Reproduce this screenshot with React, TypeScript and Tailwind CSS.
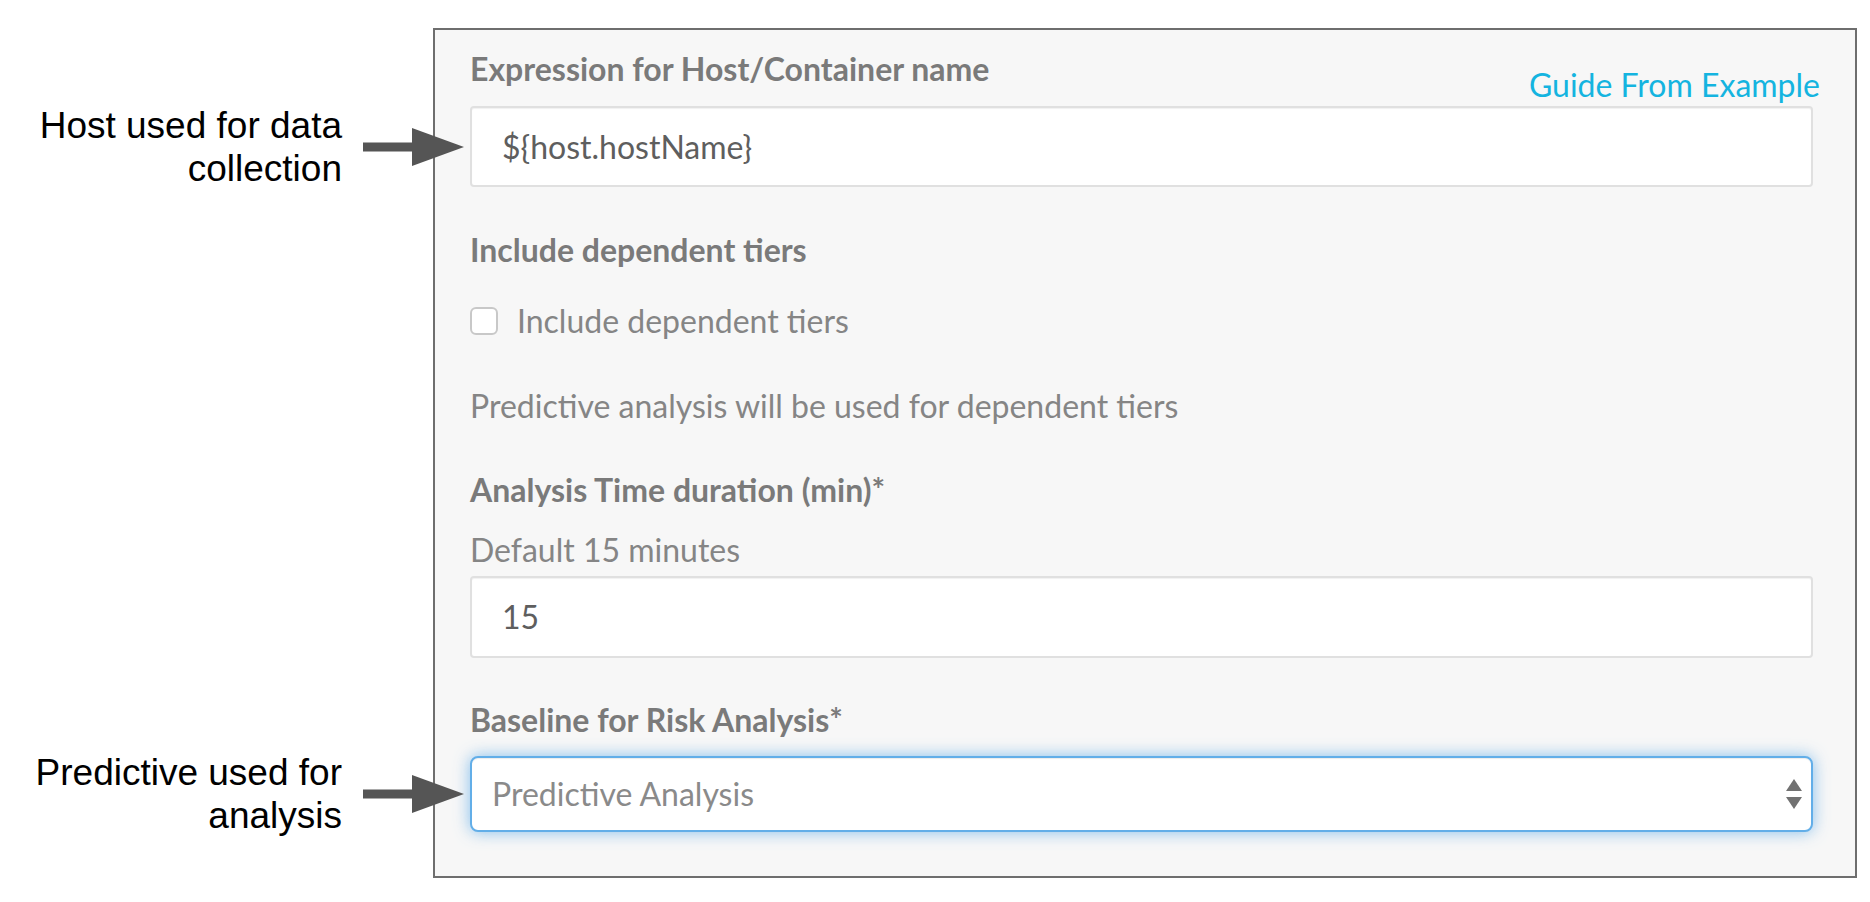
import React from "react";

const ui = { fontFamily: "Lato, 'Noto Sans', sans-serif" };
const ann = { fontFamily: "'Liberation Sans', Arial, sans-serif" };

function Arrow() {
  return (
    <svg width="101" height="38" viewBox="0 0 101 38" className="shrink-0">
      <rect x="0" y="14.5" width="50" height="9" fill="#555555" />
      <polygon points="49,0 101,19 49,38" fill="#555555" />
    </svg>
  );
}

function Callout({ lines }: { lines: string[] }) {
  return (
    <div className="absolute right-full top-1/2 -translate-y-1/2 mr-[8px] flex items-center gap-[21px]">
      <div
        style={ann}
        className="text-right whitespace-nowrap text-[37px] leading-[43px] text-black"
      >
        {lines.map((l) => (
          <div key={l}>{l}</div>
        ))}
      </div>
      <Arrow />
    </div>
  );
}

function Label({ children, className = "" }: { children: React.ReactNode; className?: string }) {
  return (
    <div className={"text-[32px] leading-[38px] font-bold text-[#7a7a7a] whitespace-nowrap " + className}>
      {children}
    </div>
  );
}

export default function App() {
  return (
    <div className="w-[1870px] h-[902px] bg-white overflow-hidden pt-[28px]" style={ui}>
      <div className="ml-[433px] w-[1424px] h-[850px] border-2 border-[#6e6e6e] bg-[#f7f7f7] pl-[35px] pr-[42px] pt-[20px]">
        {/* Field 1 */}
        <div className="flex justify-between">
          <Label>Expression for Host/Container name</Label>
          <div className="mt-[16px] -mr-[7px] text-[32px] leading-[38px] text-[#14b4e0] whitespace-nowrap">
            Guide From Example
          </div>
        </div>
        <div className="relative mt-[2px] h-[81px] rounded-[4px] border-2 border-[#e0e0e0] bg-white pl-[30px] flex items-center text-[32px] text-[#5e5e5e] shadow-[inset_0_1px_1px_rgba(0,0,0,0.06)]">
          {"${host.hostName}"}
          <Callout lines={["Host used for data", "collection"]} />
        </div>

        {/* Field 2 */}
        <Label className="mt-[44px]">Include dependent tiers</Label>
        <div className="mt-[33px] h-[38px] flex items-center gap-[19px]">
          <div className="w-[28px] h-[28px] rounded-[6px] border-2 border-[#c8c8c8] bg-white shrink-0" />
          <span className="text-[32px] leading-[38px] text-[#858585] whitespace-nowrap">Include dependent tiers</span>
        </div>
        <div className="mt-[47px] text-[32px] leading-[38px] text-[#858585] whitespace-nowrap">
          Predictive analysis will be used for dependent tiers
        </div>

        {/* Field 3 */}
        <Label className="mt-[46px]">Analysis Time duration (min)*</Label>
        <div className="mt-[22px] text-[32px] leading-[38px] text-[#858585] whitespace-nowrap">Default 15 minutes</div>
        <div className="mt-[7px] h-[82px] rounded-[4px] border-2 border-[#e0e0e0] bg-white pl-[30px] flex items-center text-[32px] text-[#5e5e5e] shadow-[inset_0_1px_1px_rgba(0,0,0,0.06)]">
          15
        </div>

        {/* Field 4 */}
        <Label className="mt-[43px]">Baseline for Risk Analysis*</Label>
        <div className="relative mt-[17px] h-[76px] rounded-[8px] border-2 border-[#62aee8] bg-white pl-[20px] pr-[9px] flex items-center justify-between text-[32px] text-[#8a8a8a] shadow-[inset_0_1px_1px_rgba(0,0,0,0.075),0_0_16px_rgba(102,175,233,0.8)]">
          <span>Predictive Analysis</span>
          <svg width="16" height="30" viewBox="0 0 16 30">
            <polygon points="0,12 8,0 16,12" fill="#727272" />
            <polygon points="0,18 16,18 8,30" fill="#727272" />
          </svg>
          <Callout lines={["Predictive used for", "analysis"]} />
        </div>
      </div>
    </div>
  );
}
